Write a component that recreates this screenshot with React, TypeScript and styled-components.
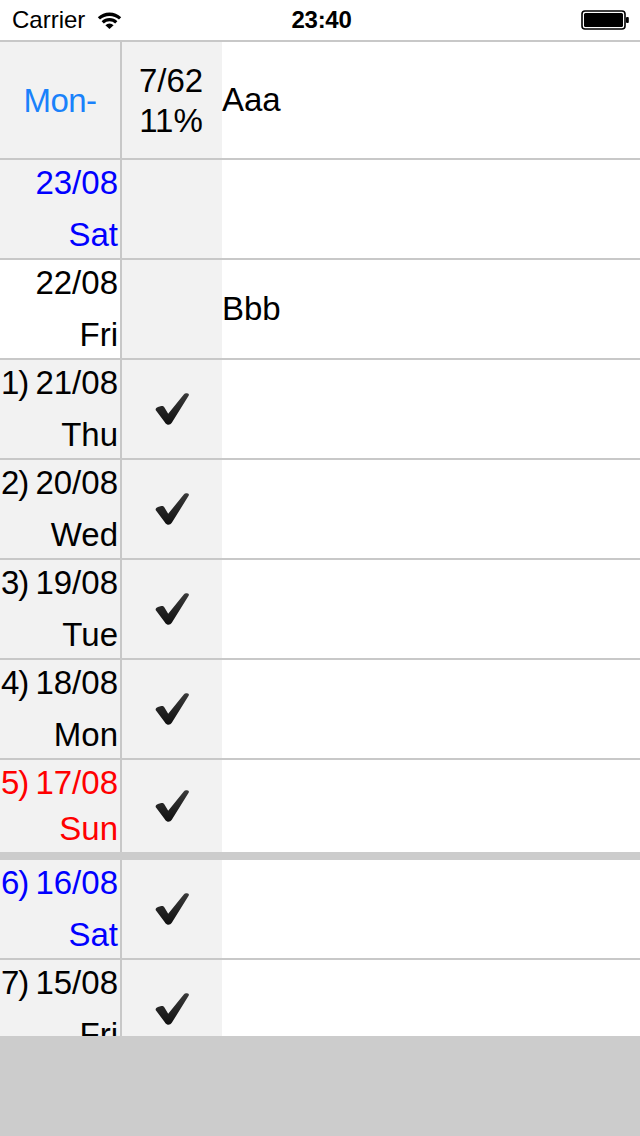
import React from "react";
import styled, { createGlobalStyle } from "styled-components";

const GlobalStyle = createGlobalStyle`
  html, body {
    margin: 0;
    padding: 0;
    background: #fff;
  }
  body {
    font-family: "Liberation Sans", Arial, sans-serif;
  }
`;

const Screen = styled.div`
  width: 640px;
  height: 1136px;
  display: flex;
  flex-direction: column;
  background: #fff;
  overflow: hidden;
`;

const StatusBar = styled.div`
  height: 40px;
  flex: none;
  display: flex;
  align-items: center;
  padding: 0 9px 0 12px;
  border-bottom: 2px solid #c8c8c8;
  font-size: 24px;
  color: #000;
`;

const Carrier = styled.div`
  display: flex;
  align-items: center;
  gap: 12px;
  flex: 1;
`;

const Clock = styled.div`
  flex: 1;
  text-align: center;
  font-weight: bold;
  letter-spacing: -0.3px;
`;

const BatteryWrap = styled.div`
  flex: 1;
  display: flex;
  justify-content: flex-end;
`;

const Table = styled.div`
  flex: 1;
  overflow: hidden;
  font-size: 33px;
`;

const Row = styled.div<{ $height: number; $sep?: boolean }>`
  display: flex;
  height: ${(p) => p.$height}px;
  border-bottom: ${(p) => (p.$sep ? 8 : 2)}px solid ${(p) => (p.$sep ? "#cccccc" : "#c8c8c8")};
  overflow: hidden;
`;

const DateCell = styled.div<{ $bg: string; $color: string }>`
  width: 122px;
  flex: none;
  box-sizing: border-box;
  border-right: 2px solid #c8c8c8;
  background: ${(p) => p.$bg};
  color: ${(p) => p.$color};
  display: flex;
  flex-direction: column;
  justify-content: space-between;
  padding-right: 2px;
`;

const DateLine = styled.div`
  height: 46px;
  line-height: 46px;
  display: flex;
  justify-content: flex-end;
  white-space: nowrap;
`;

const Prefix = styled.span`
  margin-right: auto;
  padding-left: 1px;
  letter-spacing: -1px;
`;

const HeadDate = styled.div`
  width: 122px;
  flex: none;
  box-sizing: border-box;
  border-right: 2px solid #c8c8c8;
  background: #f2f2f2;
  color: #1a82fb;
  display: flex;
  align-items: center;
  justify-content: center;
  padding-top: 2px;
  letter-spacing: -0.5px;
`;

const CheckCell = styled.div`
  width: 100px;
  flex: none;
  background: #f2f2f2;
  display: flex;
  align-items: center;
  justify-content: center;
`;

const Stats = styled.div`
  display: flex;
  flex-direction: column;
  align-items: center;
  line-height: 40px;
  margin: 2px 0 0 -2px;
`;

const Content = styled.div`
  flex: 1;
  display: flex;
  align-items: center;
  color: #000;
  white-space: nowrap;
`;

const BottomBar = styled.div`
  height: 100px;
  flex: none;
  background: #cccccc;
`;

const Wifi = () => (
  <svg width="25" height="18" viewBox="0 0 25 18">
    <path d="M0.8 6.2 A17 17 0 0 1 24.2 6.2 L22 8.6 A14 14 0 0 0 3 8.6 Z" fill="#000" />
    <path d="M4.6 10.2 A11.5 11.5 0 0 1 20.4 10.2 L18.2 12.6 A8.4 8.4 0 0 0 6.8 12.6 Z" fill="#000" />
    <path d="M8.4 14.2 A6 6 0 0 1 16.6 14.2 L12.5 18 Z" fill="#000" />
  </svg>
);

const Battery = () => (
  <svg width="50" height="20" viewBox="0 0 50 20">
    <rect x="1" y="1" width="43" height="18" rx="3" fill="none" stroke="#000" strokeWidth="1.6" />
    <rect x="3" y="3" width="39" height="14" rx="1.5" fill="#000" />
    <rect x="45" y="7" width="2.8" height="6" rx="1" fill="#000" />
  </svg>
);

const Check = () => (
  <svg width="34" height="32" viewBox="0 0 34 32">
    <defs>
      <linearGradient id="chk" x1="0" y1="0" x2="0" y2="1">
        <stop offset="0" stopColor="#3a3a3a" />
        <stop offset="1" stopColor="#101010" />
      </linearGradient>
    </defs>
    <path
      d="M0.8 17.2 C0.2 15.8 1.2 14.4 3 13.9 L6.2 13 C7.6 12.7 8.6 13.2 9.3 14.3 L13.2 20.8 L28.8 1.4 C29.6 0.4 30.8 0 31.9 0.3 L33 0.6 C33.9 0.9 34.2 1.9 33.6 2.8 L16.8 29.8 C15.8 31.4 13.8 32 12.2 31.5 C11 31.1 10.3 30.3 9.8 29.3 Z"
      fill="url(#chk)"
    />
  </svg>
);

type Day = {
  num?: number;
  date: string;
  day: string;
  color: string;
  bg: string;
  checked: boolean;
  text?: string;
  sep?: boolean;
};

const days: Day[] = [
  { date: "23/08", day: "Sat", color: "#0000ff", bg: "#f2f2f2", checked: false },
  { date: "22/08", day: "Fri", color: "#000", bg: "#fff", checked: false, text: "Bbb" },
  { num: 1, date: "21/08", day: "Thu", color: "#000", bg: "#f2f2f2", checked: true },
  { num: 2, date: "20/08", day: "Wed", color: "#000", bg: "#f2f2f2", checked: true },
  { num: 3, date: "19/08", day: "Tue", color: "#000", bg: "#f2f2f2", checked: true },
  { num: 4, date: "18/08", day: "Mon", color: "#000", bg: "#f2f2f2", checked: true },
  { num: 5, date: "17/08", day: "Sun", color: "#ff0000", bg: "#f2f2f2", checked: true, sep: true },
  { num: 6, date: "16/08", day: "Sat", color: "#0000ff", bg: "#f2f2f2", checked: true },
  { num: 7, date: "15/08", day: "Fri", color: "#000", bg: "#f2f2f2", checked: true },
];

export default function App() {
  return (
    <>
      <GlobalStyle />
      <Screen>
        <StatusBar>
          <Carrier>
            Carrier
            <Wifi />
          </Carrier>
          <Clock>23:40</Clock>
          <BatteryWrap>
            <Battery />
          </BatteryWrap>
        </StatusBar>

        <Table>
          <Row $height={116}>
            <HeadDate>Mon-</HeadDate>
            <CheckCell>
              <Stats>
                <div>7/62</div>
                <div>11%</div>
              </Stats>
            </CheckCell>
            <Content>Aaa</Content>
          </Row>

          {days.map((d) => (
            <Row key={d.date} $height={d.sep ? 92 : 98} $sep={d.sep}>
              <DateCell $bg={d.bg} $color={d.color}>
                <DateLine>
                  {d.num && <Prefix>{`${d.num})`}</Prefix>}
                  {d.date}
                </DateLine>
                <DateLine>{d.day}</DateLine>
              </DateCell>
              <CheckCell>{d.checked && <Check />}</CheckCell>
              <Content>{d.text}</Content>
            </Row>
          ))}
        </Table>

        <BottomBar />
      </Screen>
    </>
  );
}
